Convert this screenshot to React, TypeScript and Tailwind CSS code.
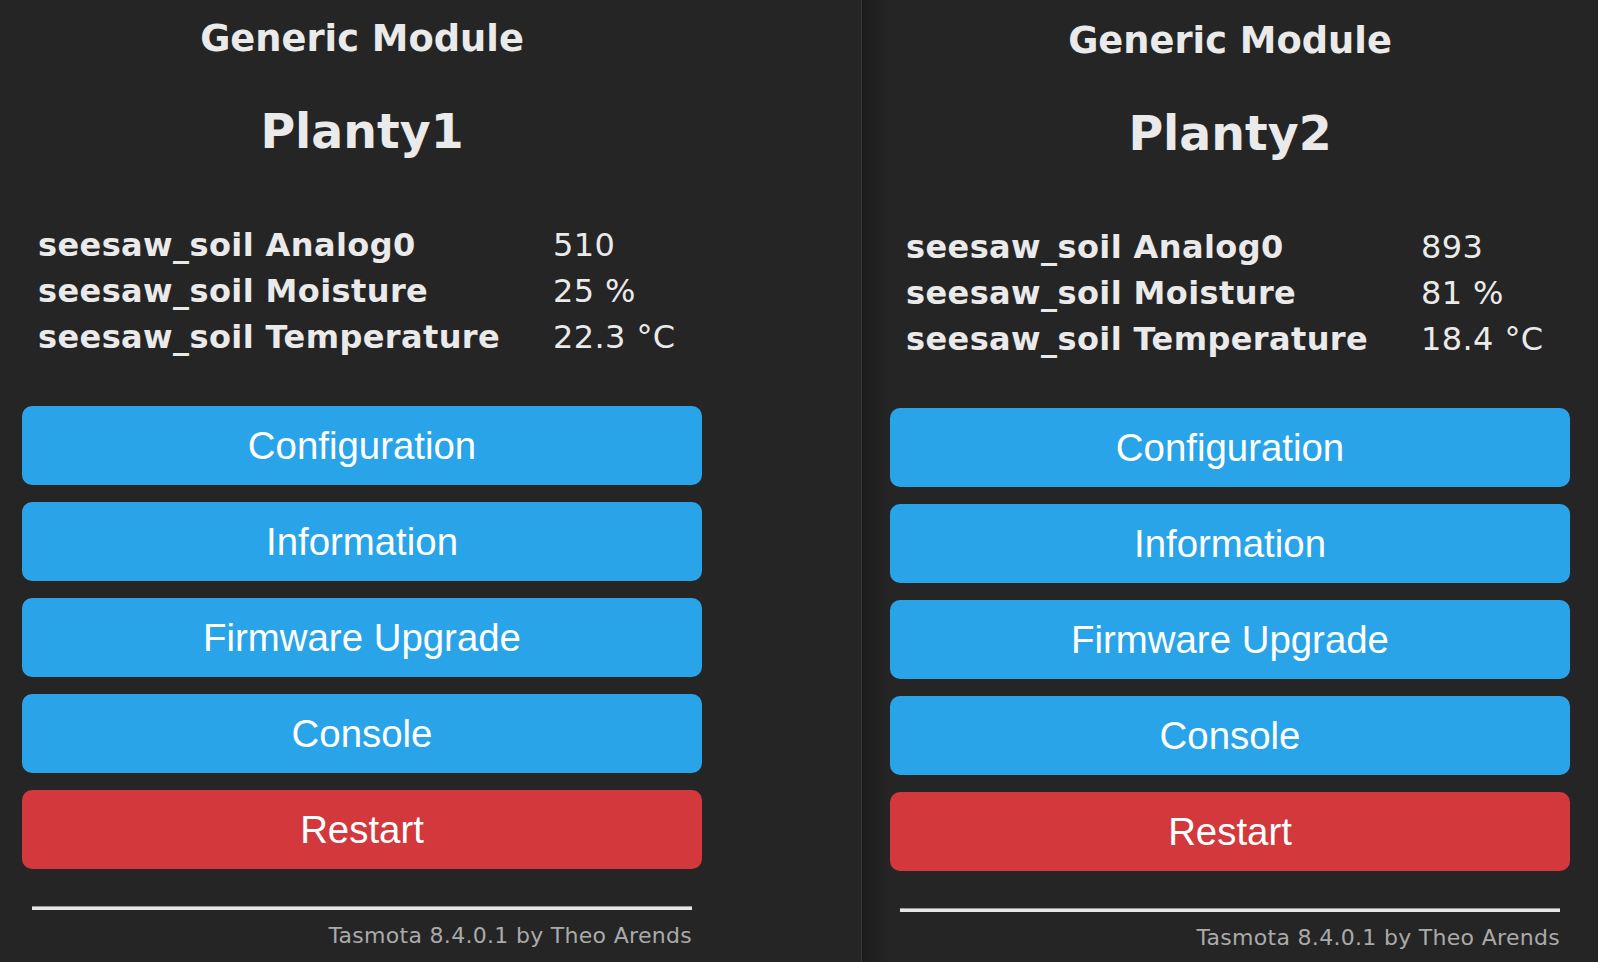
import React from "react";

type Row = { label: string; value: string };

const Panel = ({ name, rows }: { name: string; rows: Row[] }) => (
  <div className="flex w-[680px] flex-col text-[#eaeaea]">
    <div className="pt-[17px] text-center font-['DejaVu_Sans',Verdana,sans-serif] text-[36.8px] font-bold leading-[44px]">
      Generic Module
    </div>
    <div className="mt-[43px] text-center font-['DejaVu_Sans',Verdana,sans-serif] text-[47.4px] font-bold leading-[56px]">
      {name}
    </div>
    <div className="mt-[62px] grid grid-cols-[515px_1fr] pl-[16px] font-['DejaVu_Sans',Verdana,sans-serif] text-[32px] leading-[46px] tracking-[0.4px]">
      {rows.map((r) => (
        <React.Fragment key={r.label}>
          <div className="whitespace-nowrap font-bold">{r.label}</div>
          <div className="whitespace-nowrap">{r.value}</div>
        </React.Fragment>
      ))}
    </div>
    <div className="mt-[46px] flex flex-col gap-[17px] font-['Liberation_Sans',Arial,sans-serif] text-[38.4px] text-white">
      {["Configuration", "Information", "Firmware Upgrade", "Console"].map((b) => (
        <div key={b} className="flex h-[79px] items-center justify-center rounded-[10px] bg-[#2aa4e8]">
          {b}
        </div>
      ))}
      <div className="flex h-[79px] items-center justify-center rounded-[10px] bg-[#d2383c]">Restart</div>
    </div>
    <div className="mx-[10px] mt-[37px] h-[4px] border-t border-[#9a9a9a] bg-[#e6e6e6]" />
    <div className="mt-[13px] pr-[10px] text-right font-['DejaVu_Sans',Verdana,sans-serif] text-[22px] leading-[26px] tracking-[0.3px] text-[#aaaaaa]">
      Tasmota 8.4.0.1 by Theo Arends
    </div>
  </div>
);

export default function App() {
  return (
    <div className="flex h-[962px] w-[1598px] overflow-hidden bg-[#252525]">
      <div className="w-[861px] shrink-0 bg-[#252525] pl-[22px]">
        <Panel
          name="Planty1"
          rows={[
            { label: "seesaw_soil Analog0", value: "510" },
            { label: "seesaw_soil Moisture", value: "25 %" },
            { label: "seesaw_soil Temperature", value: "22.3 °C" },
          ]}
        />
      </div>
      <div className="w-[1px] shrink-0 bg-[#383838]" />
      <div className="flex-1 bg-[linear-gradient(to_right,#1c1c1c,#252525_28px)] pl-[28px] pt-[2px]">
        <Panel
          name="Planty2"
          rows={[
            { label: "seesaw_soil Analog0", value: "893" },
            { label: "seesaw_soil Moisture", value: "81 %" },
            { label: "seesaw_soil Temperature", value: "18.4 °C" },
          ]}
        />
      </div>
    </div>
  );
}
